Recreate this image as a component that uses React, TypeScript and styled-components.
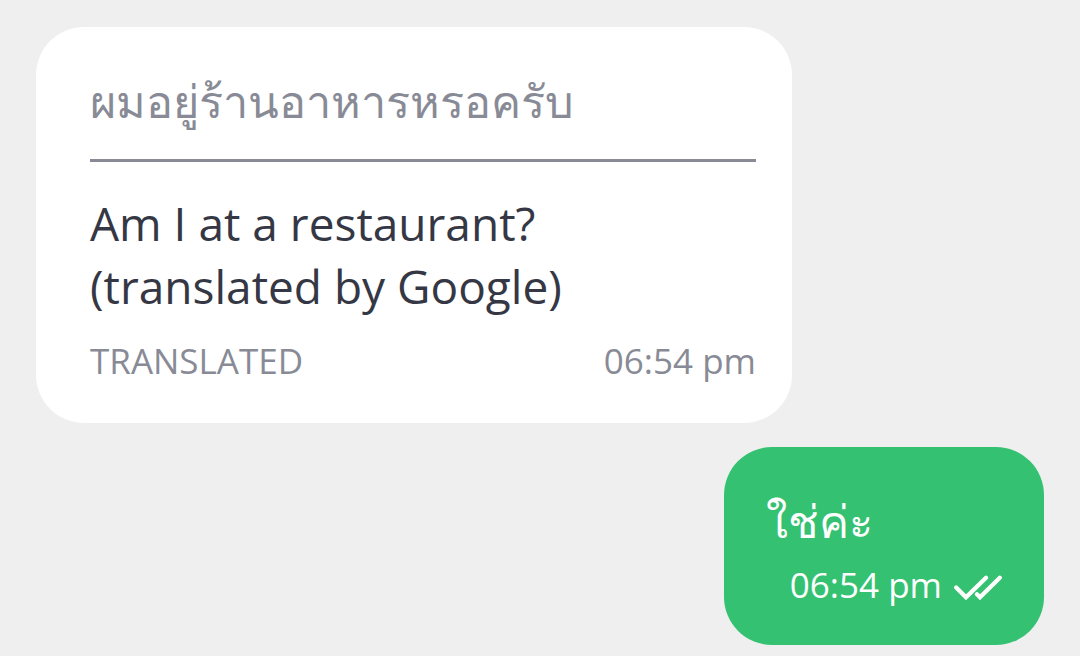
import React from 'react';
import styled, { createGlobalStyle } from 'styled-components';

const Global = createGlobalStyle`
  * { box-sizing: border-box; }
  body { margin: 0; background: #efefef; font-family: "Open Sans", "Noto Sans", sans-serif; }
  p { margin: 0; }
`;

const Conversation = styled.main`
  min-height: 100vh;
  padding: 27px 36px 11px;
  display: flex;
  flex-direction: column;
  gap: 24px;
`;

const Bubble = styled.article<{ $outgoing?: boolean }>`
  align-self: ${p => (p.$outgoing ? 'flex-end' : 'flex-start')};
  width: ${p => (p.$outgoing ? 'auto' : '75%')};
  padding: ${p => (p.$outgoing ? '40px 42px 38px' : '40px 36px 40px 54px')};
  border-radius: 48px;
  background: ${p => (p.$outgoing ? '#35c172' : '#ffffff')};
  color: ${p => (p.$outgoing ? '#ffffff' : '#353844')};
`;

const ThaiText = styled.p<{ $muted?: boolean }>`
  font-size: 45px;
  line-height: 68px;
  color: ${p => (p.$muted ? '#888b96' : 'inherit')};
`;

const Divider = styled.hr`
  height: 3px;
  margin: 24px 0 30px;
  border: 0;
  background: #888b96;
`;

const Message = styled.p`
  font-size: 46px;
  line-height: 63px;
`;

const Meta = styled.footer<{ $outgoing?: boolean }>`
  display: flex;
  align-items: center;
  justify-content: ${p => (p.$outgoing ? 'flex-end' : 'space-between')};
  gap: 12px;
  margin-top: ${p => (p.$outgoing ? '8px' : '21px')};
  padding-left: ${p => (p.$outgoing ? '24px' : '0')};
  font-size: 35px;
  line-height: 44px;
  color: ${p => (p.$outgoing ? '#ffffff' : '#888b96')};
`;

const ReadMark = styled.svg`
  width: 48px;
  height: 32px;
  flex: none;
`;

export default function App() {
  return (
    <>
      <Global />
      <Conversation>
        <Bubble>
          <ThaiText $muted lang="th">ผมอยู่ร้านอาหารหรอครับ</ThaiText>
          <Divider />
          <Message>Am I at a restaurant?<br />(translated by Google)</Message>
          <Meta><span>TRANSLATED</span><time>06:54 pm</time></Meta>
        </Bubble>
        <Bubble $outgoing>
          <ThaiText lang="th">ใช่ค่ะ</ThaiText>
          <Meta $outgoing>
            <time>06:54 pm</time>
            <ReadMark viewBox="0 0 48 32" fill="none" stroke="#fff" strokeWidth="4.2" strokeLinecap="round" role="img" aria-label="Read">
              <path d="M2.2 18.4 12 28.2 32 8.8M23 25.2 26 28.2 45.8 8.8" />
            </ReadMark>
          </Meta>
        </Bubble>
      </Conversation>
    </>
  );
}
